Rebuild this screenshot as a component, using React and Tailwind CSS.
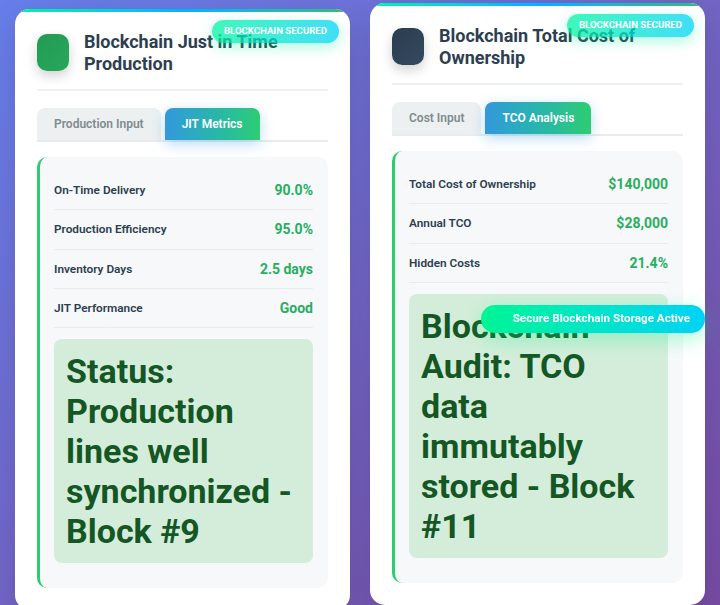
import React from 'react';

const cards = [
  {
    title: 'Blockchain Just in Time Production',
    icon: 'from-[#239b52] to-[#27a85c]',
    tabs: ['Production Input', 'JIT Metrics'],
    rows: [
      ['On-Time Delivery', '90.0%'],
      ['Production Efficiency', '95.0%'],
      ['Inventory Days', '2.5 days'],
      ['JIT Performance', 'Good'],
    ],
    status: 'Status: Production lines well synchronized - Block #9',
    lift: 'mt-[9px]',
  },
  {
    title: 'Blockchain Total Cost of Ownership',
    icon: 'from-[#2c3e50] to-[#34495e]',
    tabs: ['Cost Input', 'TCO Analysis'],
    rows: [
      ['Total Cost of Ownership', '$140,000'],
      ['Annual TCO', '$28,000'],
      ['Hidden Costs', '21.4%'],
    ],
    status: 'Blockchain Audit: TCO data immutably stored - Block #11',
    lift: 'mt-[3px]',
  },
];

function Card({ card }) {
  return (
    <div
      className={`relative bg-white rounded-[15px] overflow-hidden shadow-[0_10px_30px_rgba(0,0,0,0.12)] px-[22px] pt-[22px] pb-[22px] ${card.lift}`}
    >
      {/* gradient strip on top */}
      <div className="absolute top-0 left-0 right-0 h-[3px] bg-linear-to-r from-[#00f5a0] via-[#00b4ff] to-[#3cb878]" />

      <div className="absolute top-[11px] right-[11px] h-[23px] px-[12px] flex items-center rounded-full bg-linear-to-r from-[#00f5a0] to-[#00d4f5] opacity-75 shadow-[0_4px_14px_rgba(0,245,160,0.45)] text-white text-[9.6px] font-bold uppercase">
        Blockchain Secured
      </div>

      {/* header */}
      <div className="flex items-center gap-[15px] pb-[15px] border-b-2 border-[#eef0f2]">
        <div className={`w-[32px] h-[37px] shrink-0 rounded-[10px] bg-linear-to-br ${card.icon} shadow-[0_5px_12px_rgba(0,0,0,0.18)]`} />
        <h2 className="text-[18px] leading-[21.5px] font-bold text-[#2c3e50]">{card.title}</h2>
      </div>

      {/* tabs */}
      <div className="mt-[17px] flex gap-[4px] border-b-2 border-[#e9ecef]">
        <div className="h-[32px] px-[17px] flex items-center rounded-t-[8px] bg-[#ecf0f1] text-[#7f8c8d] text-[12px] font-semibold">
          {card.tabs[0]}
        </div>
        <div className="h-[32px] px-[17px] flex items-center rounded-t-[8px] bg-linear-to-r from-[#3498db] to-[#2ecc71] text-white text-[12px] font-semibold shadow-[0_4px_14px_rgba(52,152,219,0.35)]">
          {card.tabs[1]}
        </div>
      </div>

      {/* panel */}
      <div className="mt-[15px] rounded-[10px] bg-[#f7f8fa] border-l-[3px] border-[#2ecc71] pl-[14px] pr-[15px] pt-[14px] pb-[25px]">
        {card.rows.map(([label, value]) => (
          <div key={label} className="h-[39.3px] flex items-center justify-between border-b border-[#e9ecef]">
            <span className="text-[11.8px] leading-[16px] font-semibold text-[#2c3e50]">{label}</span>
            <span className="text-[14px] leading-[16px] font-bold text-[#27ae60]">{value}</span>
          </div>
        ))}
        <div className="mt-[11px] rounded-[8px] bg-[#d4edda] p-[12px] text-[34px] leading-[40px] font-bold text-[#155724]">
          {card.status}
        </div>
      </div>
    </div>
  );
}

export default function App() {
  return (
    <div className="min-h-screen bg-linear-to-br from-[#667eea] to-[#764ba2] px-[15px] font-['Roboto',sans-serif]">
      <div className="grid grid-cols-2 gap-5 items-start">
        {cards.map((c) => (
          <Card key={c.title} card={c} />
        ))}
      </div>

      {/* toast */}
      <div className="fixed top-[305px] right-[15px] h-[28px] pl-[32px] pr-[15px] flex items-center rounded-full bg-linear-to-r from-[#00f593] to-[#00d2f5] shadow-[0_6px_20px_rgba(0,245,147,0.35)] text-white text-[11.7px] font-bold">
        Secure Blockchain Storage Active
      </div>
    </div>
  );
}
